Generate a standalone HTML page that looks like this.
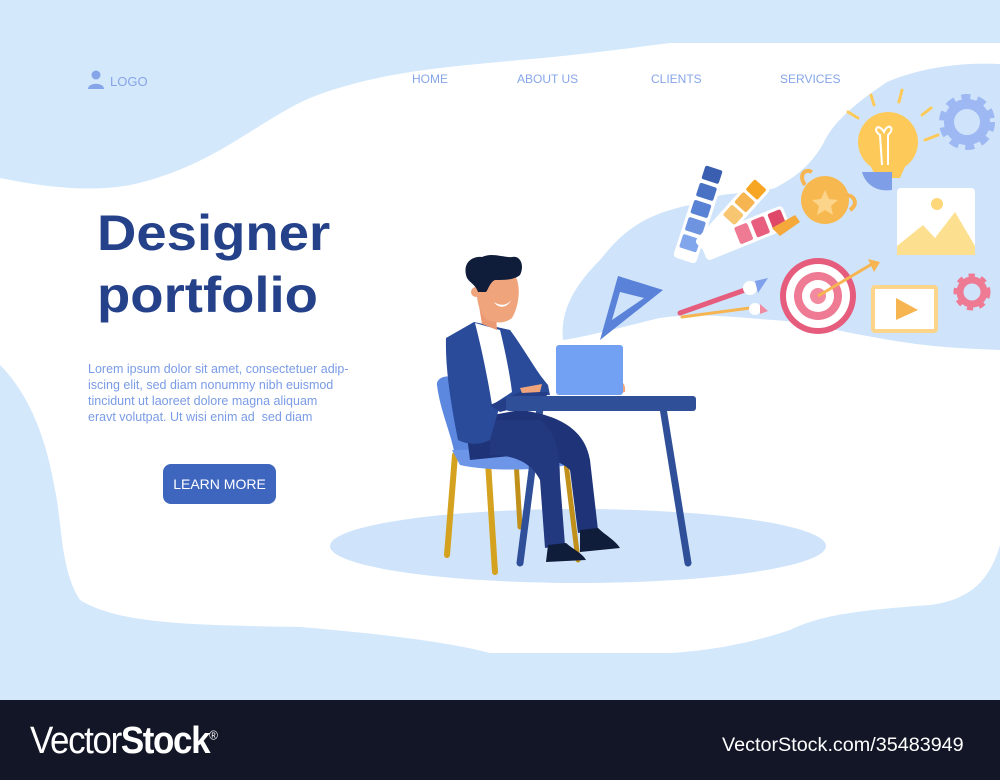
<!DOCTYPE html>
<html><head><meta charset="utf-8"><style>
html,body{margin:0;padding:0}
body{width:1000px;height:780px;position:relative;overflow:hidden;background:#d4e8fc;font-family:"Liberation Sans",sans-serif}
svg{position:absolute;left:0;top:0}
.t{position:absolute;white-space:nowrap}
</style></head><body>
<svg width="1000" height="780" viewBox="0 0 1000 780">
<path fill="#fff" d="M0 178 C40 186 100 196 150 180 C220 160 260 120 310 98 C380 70 460 66 520 60 C580 55 630 48 670 43 L1000 43 L1000 545 C990 580 970 600 930 605 C860 610 820 615 790 630 C760 640 720 650 670 653 L490 653 C440 640 360 632 300 627 C200 625 120 625 80 600 C60 570 62 520 55 490 C45 430 25 390 0 365 Z"/>
<path fill="#cfe4fb" d="M887 82 C860 100 835 120 825 140 C815 160 800 175 775 188 C750 195 720 190 690 205 C640 215 620 235 600 260 C575 285 560 310 563 340 C590 336 630 325 660 318 C700 312 740 318 773 320 C810 322 840 332 873 337 C910 344 940 348 1000 350 L1000 64 C960 62 920 68 887 82 Z"/>
<ellipse cx="578" cy="546" rx="248" ry="37" fill="#cfe4fb"/>
<path d="M455 455 L447 555" stroke="#d4a21e" stroke-width="6" stroke-linecap="round"/>
<path d="M488 462 L495 572" stroke="#d4a21e" stroke-width="6" stroke-linecap="round"/>
<path d="M516 460 L520 527" stroke="#c0901a" stroke-width="5" stroke-linecap="round"/>
<path d="M565 455 L578 560" stroke="#c0901a" stroke-width="5" stroke-linecap="round"/>
<path fill="#5c88e0" d="M437 385 C436 378 446 375 452 377 L462 380 L470 450 L455 455 C450 430 440 410 437 385Z"/>
<path fill="#6d96e8" d="M452 450 L570 448 L568 465 C540 470 490 472 460 465Z"/>
<path d="M540 408 L520 563" stroke="#2f4f99" stroke-width="7" stroke-linecap="round"/>
<path d="M663 408 L688 563" stroke="#2f4f99" stroke-width="7" stroke-linecap="round"/>
<path fill="#1f3478" d="M465 420 L520 410 C560 415 585 430 590 460 L598 530 L578 533 L570 470 C560 460 540 455 520 455 L470 460Z"/>
<path fill="#22397f" d="M490 420 L540 420 C555 430 560 450 560 480 L565 545 L545 548 L540 480 C530 460 510 455 490 455Z"/>
<path fill="#0f1d3a" d="M580 530 L598 528 C605 535 615 540 620 548 L580 552Z"/>
<path fill="#0f1d3a" d="M548 545 L566 543 C574 550 582 553 586 560 L546 562Z"/>
<path fill="#2a4a9a" d="M446 338 L474 322 L510 330 C525 350 535 370 548 385 L550 395 L520 396 L500 405 L490 440 C480 445 468 445 458 440 C452 410 445 370 446 338Z"/>
<path fill="#fff" d="M475 323 L500 330 C505 350 510 375 512 392 L492 405 C488 380 482 350 475 323Z"/>
<path fill="#243f88" d="M490 405 L520 392 L548 392 L545 400 L500 412Z"/>
<path fill="#e99872" d="M478 300 L495 300 L497 330 L482 324Z"/>
<path fill="#f0a47c" d="M478 282 C480 270 500 268 512 272 C522 280 520 305 512 318 C505 324 492 324 485 318 C478 310 475 295 478 282Z"/>
<circle cx="476" cy="292" r="5" fill="#f0a47c"/>
<path fill="#fff" d="M494 302 C500 306 507 306 511 300 C508 308 498 309 494 302Z"/>
<path fill="#0f1d3a" d="M467 278 C462 265 470 256 482 257 C492 252 505 258 512 257 C520 255 525 265 520 275 C514 280 505 280 495 280 C490 282 488 290 486 292 L478 292 C476 285 470 283 467 278Z"/>
<path fill="#f0a47c" d="M520 388 L542 384 L540 392 L522 393Z"/>
<path fill="#f0a47c" d="M616 382 C622 380 626 384 625 392 L616 394Z"/>
<rect x="556" y="345" width="67" height="50" rx="3" fill="#72a0f2"/>
<rect x="506" y="396" width="190" height="15" rx="3" fill="#2f5099"/>
<path fill="#5a82d8" d="M600 340 L618 276 L663 290Z M612 320 L620 292 L644 298Z" fill-rule="evenodd"/>
<g transform="rotate(18 700 215)">
<rect x="687" y="163" width="24" height="100" rx="4" fill="#fff"/>
<rect x="690" y="166" width="18" height="14" rx="2" fill="#3a5fb0"/>
<rect x="690" y="184" width="18" height="14" rx="2" fill="#4a72c4"/>
<rect x="690" y="202" width="18" height="14" rx="2" fill="#5a82d4"/>
<rect x="690" y="220" width="18" height="14" rx="2" fill="#6e94e0"/>
<rect x="690" y="238" width="18" height="14" rx="2" fill="#82a6ec"/>
</g>
<g transform="rotate(42 730 220)">
<rect x="718" y="170" width="22" height="90" rx="4" fill="#fff"/>
<rect x="721" y="173" width="16" height="14" rx="2" fill="#f6a623"/>
<rect x="721" y="190" width="16" height="14" rx="2" fill="#f6b550"/>
<rect x="721" y="207" width="16" height="14" rx="2" fill="#f8c570"/>
</g>
<g transform="rotate(68 740 235)">
<rect x="728" y="185" width="24" height="90" rx="4" fill="#fff"/>
<rect x="731" y="188" width="18" height="14" rx="2" fill="#e0486a"/>
<rect x="731" y="206" width="18" height="14" rx="2" fill="#e85e7e"/>
<rect x="731" y="224" width="18" height="14" rx="2" fill="#ee7a94"/>
</g>
<path fill="#f4a93a" d="M772 228 L795 215 L800 222 L780 236Z"/>
<circle cx="825" cy="200" r="24" fill="#f8b850"/>
<path fill="#fcd48a" d="M825 190 L829 199 L838 200 L831 206 L833 215 L825 210 L817 215 L819 206 L812 200 L821 199Z"/>
<path d="M805 185 C798 175 805 168 812 172 M845 195 C856 195 858 205 850 210" stroke="#f6b550" stroke-width="4" fill="none"/>
<circle cx="888" cy="142" r="30" fill="#fdca5a"/>
<path fill="#fdca5a" d="M868 160 L908 160 L900 178 L876 178Z"/>
<path fill="#7e9fe8" d="M862 172 L892 172 L892 190 C878 192 866 186 862 172Z"/>
<path d="M882 165 L880 135 C872 130 878 122 884 132 C888 122 896 128 888 135 L888 165" stroke="#fff" stroke-width="2" fill="none"/>
<path d="M871 95 L874 105 M902 90 L899 102 M931 108 L922 115 M938 135 L925 140 M848 112 L858 118" stroke="#fdca5a" stroke-width="3" stroke-linecap="round"/>
<circle cx="967" cy="122" r="18" fill="none" stroke="#9db8f2" stroke-width="10"/>
<circle cx="967" cy="122" r="25" fill="none" stroke="#9db8f2" stroke-width="6" stroke-dasharray="9 7"/>
<rect x="897" y="188" width="78" height="67" rx="4" fill="#fff"/>
<circle cx="937" cy="204" r="6" fill="#fdd77a"/>
<path fill="#fde08f" d="M897 246 L923 225 L935 238 L955 212 L975 246 L975 255 L897 255Z"/>
<path d="M680 313 L745 290" stroke="#e55c7d" stroke-width="5" stroke-linecap="round"/>
<path d="M682 317 L750 308" stroke="#f6b550" stroke-width="3" stroke-linecap="round"/>
<circle cx="750" cy="288" r="7" fill="#fff"/>
<path fill="#7fa0ea" d="M755 281 L768 278 L758 293Z"/>
<circle cx="755" cy="309" r="6" fill="#fff"/>
<path fill="#f08aa0" d="M760 304 L768 311 L760 314Z"/>
<circle cx="818" cy="296" r="38" fill="#e55c7d"/>
<circle cx="818" cy="296" r="32" fill="#fff"/>
<circle cx="818" cy="296" r="24" fill="#ee7a94"/>
<circle cx="818" cy="296" r="16" fill="#fff"/>
<circle cx="818" cy="296" r="8" fill="#f28aa0"/>
<path d="M818 296 L872 264" stroke="#f6b550" stroke-width="3"/>
<path fill="#f6b550" d="M868 259 L880 262 L874 272Z"/>
<rect x="873" y="287" width="63" height="44" rx="2" fill="#fff" stroke="#fcd48a" stroke-width="4"/>
<path fill="#f6b550" d="M896 298 L918 310 L896 320Z"/>
<circle cx="972" cy="292" r="12" fill="none" stroke="#ee7a94" stroke-width="7"/>
<circle cx="972" cy="292" r="16" fill="none" stroke="#ee7a94" stroke-width="5" stroke-dasharray="6 6"/>
<rect x="0" y="700" width="1000" height="80" fill="#121626"/>
<circle cx="96" cy="75" r="4.5" fill="#86a5e8"/>
<path fill="#86a5e8" d="M88 89 C88 82 104 82 104 89Z"/>
</svg>
<div class="t" style="left:110px;top:74px;font-size:13px;color:#86a5e8">LOGO</div>
<div class="t" style="left:412px;top:72px;font-size:12px;color:#86a5e8">HOME</div>
<div class="t" style="left:517px;top:72px;font-size:12px;color:#86a5e8">ABOUT US</div>
<div class="t" style="left:651px;top:72px;font-size:12px;color:#86a5e8">CLIENTS</div>
<div class="t" style="left:780px;top:72px;font-size:12px;color:#86a5e8">SERVICES</div>
<div class="t" style="left:97px;top:202px;font-size:50px;font-weight:bold;color:#24418a;line-height:62px;transform:scaleX(1.09);transform-origin:left">Designer<br>portfolio</div>
<div class="t" style="left:88px;top:361px;font-size:12.5px;color:#7a9be6;line-height:16px">Lorem ipsum dolor sit amet, consectetuer adip-<br>iscing elit, sed diam nonummy nibh euismod<br>tincidunt ut laoreet dolore magna aliquam<br>eravt volutpat. Ut wisi enim ad&nbsp; sed diam</div>
<div class="t" style="left:163px;top:464px;width:113px;height:40px;background:#3f66bf;border-radius:8px;color:#fff;font-size:14px;line-height:40px;text-align:center">LEARN MORE</div>
<div class="t" style="left:30px;top:720px;font-size:38px;color:#fff;letter-spacing:-1.5px;transform:scaleX(0.92);transform-origin:left"><span>Vector</span><b>Stock</b><sup style="font-size:13px">®</sup></div>
<div class="t" style="left:722px;top:735px;font-size:19px;color:#fff;transform:scaleX(1.04);transform-origin:left">VectorStock.com/35483949</div>
</body></html>
